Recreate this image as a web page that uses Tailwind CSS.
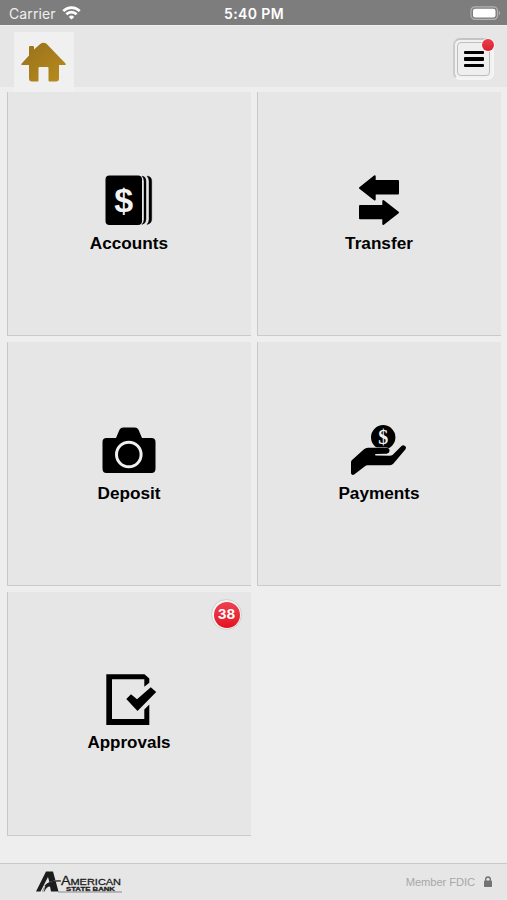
<!DOCTYPE html>
<html lang="en">
<head>
  <meta charset="UTF-8">
  <meta name="viewport" content="width=device-width, initial-scale=1.0">
  <title>American State Bank</title>
  <script src="https://cdn.jsdelivr.net/npm/@tailwindcss/browser@4"></script>
</head>
<body class="flex h-[900px] w-[507px] flex-col overflow-hidden bg-[#eeeeee] font-['Liberation_Sans',sans-serif] text-black">

  <!-- Status bar -->
  <div class="grid h-[25px] shrink-0 grid-cols-3 items-center bg-[#7d7d7d] pt-[3px] pr-[6px] pl-[9px] font-['Inter',sans-serif] text-white">
    <div class="flex items-center gap-[6px]">
      <span class="text-[14px] leading-5 text-[#efefef] tracking-[0.1px]">Carrier</span>
      <svg class="mb-[2px] h-[14px] w-[19px]" viewBox="0 0 19 14" fill="none" stroke="#fff" stroke-width="2.7">
        <path d="M1.3 5.1a11.6 11.6 0 0 1 16.4 0"/>
        <path d="M4.4 8.3a7.2 7.2 0 0 1 10.2 0"/>
        <path d="M9.5 13.6 6.8 10.9a3.8 3.8 0 0 1 5.4 0z" fill="#fff" stroke="none"/>
      </svg>
    </div>
    <span class="pr-[2px] text-center text-[14px] leading-5 font-semibold tracking-[0.4px]">5:40 PM</span>
    <svg class="mb-[3px] h-[14px] w-[31px] justify-self-end" viewBox="0 0 31 14">
      <rect x="1" y="0.8" width="26.5" height="12.6" rx="4" fill="none" stroke="#b3b3b3" stroke-width="1.2"/>
      <rect x="3" y="2.7" width="22.5" height="8.8" rx="2.2" fill="#fff"/>
      <path d="M28.8 4.8c1.5.5 1.5 4 0 4.5z" fill="#b3b3b3"/>
    </svg>
  </div>

  <!-- Header -->
  <header class="flex h-[62px] shrink-0 items-start justify-between border-t border-[#efefef] bg-[#e6e6e6] pr-[13px] pl-[14px]">
    <div class="mt-[6px] h-[60px] w-[60px] bg-[#f0f0f0]">
      <svg class="h-[60px] w-[60px]" viewBox="0 0 60 60">
        <defs>
          <linearGradient id="gold" x1="0" y1="0" x2="1" y2="1">
            <stop offset="0" stop-color="#97701a"/>
            <stop offset="1" stop-color="#b98c1e"/>
          </linearGradient>
        </defs>
        <path fill="url(#gold)" d="M15 15q0-1 1-1h3q1 0 1 1v2.5l6.5-5.7q3-2 6 0L51.500 31.500q1 1.500-.5 1.500h-6v13.500q0 3-3 3h-6.500q-1 0-1-1V36q0-1-1-1h-8q-1 0-1 1v12.500q0 1-1 1H18q-3 0-3-3V33H8.500q-2 0-.8-1.500L15 23.500z"/>
      </svg>
    </div>
    <button class="relative mt-[12px] flex h-[42px] w-[41px] items-center justify-center rounded-[7px] border-2 border-t-[#c4c4c4] border-r-[#f5f5f5] border-b-[#f5f5f5] border-l-[#cccccc] bg-[#f1f1f1]">
      <span class="flex h-[34px] w-[33px] flex-col items-center justify-center gap-[3px] rounded-[4px] border border-[#bebebe] bg-[#efefef]">
        <span class="h-[3.500px] w-[20px] rounded-[1px] bg-black"></span>
        <span class="h-[3.500px] w-[20px] rounded-[1px] bg-black"></span>
        <span class="h-[3.500px] w-[20px] rounded-[1px] bg-black"></span>
      </span>
      <span class="absolute -top-[1px] -right-[2px] h-[12px] w-[12px] rounded-full bg-linear-to-b from-[#ef3b48] to-[#d81f31] ring-1 ring-[#f3f3f3]"></span>
    </button>
  </header>

  <!-- Tiles -->
  <main class="grid grow auto-rows-[244px] grid-cols-[244px_244px] content-start gap-x-[6px] gap-y-[6px] pt-[5px] pl-[7px]">
    <div class="flex flex-col items-center border-b border-l border-b-[#cacaca] border-l-[#c8c8c8] bg-[#e6e6e6] pt-[83px] pr-[1px]">
      <svg class="h-[50px] w-[60px]" viewBox="0 0 60 50">
        <rect x="6.500" y="0.500" width="36.500" height="49.500" rx="4"/>
        <path d="M43 1q4 .5 4 5v38q0 4.500-4 5.500 2-2 2-5V6q0-3-2-5zM48 1q4.700.500 4.700 5v38q0 4.500-4.700 5.500 2-2 2-5V6q0-3-2-5z" stroke="#000" stroke-width=".4"/>
        <text x="24.800" y="36.500" text-anchor="middle" fill="#f2f2f2" font-family="Liberation Sans" font-weight="bold" font-size="34">$</text>
      </svg>
      <span class="mt-1.5 text-[17.200px] leading-6 font-bold">Accounts</span>
    </div>

    <div class="flex flex-col items-center border-b border-l border-b-[#cacaca] border-l-[#c8c8c8] bg-[#e6e6e6] pt-[83px] pr-[1px]">
      <svg class="h-[50px] w-[60px]" viewBox="0 0 60 50" stroke="#000" stroke-width="2" stroke-linejoin="round">
        <path d="M11 13 25.700 1.200V6H49v12.500H25.700v6z"/>
        <path d="M49 37.500 34.300 26v5H11v12.300h23.300V49z"/>
      </svg>
      <span class="mt-1.5 text-[17.200px] leading-6 font-bold">Transfer</span>
    </div>

    <div class="flex flex-col items-center border-b border-l border-b-[#cacaca] border-l-[#c8c8c8] bg-[#e6e6e6] pt-[83px] pr-[1px]">
      <svg class="h-[50px] w-[60px]" viewBox="0 0 60 50">
        <path d="M7.500 13H17l3.500-8.300q1.200-2.300 3.700-2.300h11.600q2.500 0 3.700 2.300l3.500 8.300h9.500q4 0 4 4v26.500q0 4.500-4 4.500h-45q-4 0-4-4.500V17q0-4 4-4z"/>
        <circle cx="29.800" cy="29.500" r="12.300" fill="none" stroke="#f0f0f0" stroke-width="3"/>
      </svg>
      <span class="mt-1.5 text-[17.200px] leading-6 font-bold">Deposit</span>
    </div>

    <div class="flex flex-col items-center border-b border-l border-b-[#cacaca] border-l-[#c8c8c8] bg-[#e6e6e6] pt-[83px] pr-[1px]">
      <svg class="h-[50px] w-[60px]" viewBox="0 0 60 50">
        <circle cx="34.200" cy="12.300" r="12.200"/>
        <text x="34.200" y="19" text-anchor="middle" fill="#f0f0f0" font-family="Liberation Serif" font-weight="bold" font-size="20">$</text>
        <path stroke="#e6e6e6" stroke-width="1" paint-order="stroke" d="M2 48.500V37q0-1 1-2l12-10.700q1.500-1.500 4-1.500h18q3.500 0 3.500 2.700t-3 3.200l-11 .3q-.8.900 0 1.500l14 .2q2 0 3-.8l9-9q1.500-1.500 3.500 0 1.800 1.500.3 3.500L44.500 38.500q-1.500 1.700-3.500 1.700H18.500q-1.500 0-2.500 1L5.500 49.300q-2.500 1.500-3.500-.8z"/>
      </svg>
      <span class="mt-1.5 text-[17.200px] leading-6 font-bold">Payments</span>
    </div>

    <div class="relative flex flex-col items-center border-b border-l border-b-[#cacaca] border-l-[#c8c8c8] bg-[#e6e6e6] pt-[82px] pr-[1px]">
      <svg class="h-[51px] w-[60px]" viewBox="0 0 60 51">
        <path d="M7.300.3H45.500l4.800 4.300v4.200l-5 4V5.300H13v39.800h32.300V35.500l5-5V51h-43z"/>
        <path d="M27.300 25.100 32 20.300l6 5L51.800 13.300l5.400 4.800L38.500 37z"/>
      </svg>
      <span class="mt-1.5 text-[17px] leading-6 font-bold">Approvals</span>
      <span class="absolute top-[7px] right-[9px] flex h-[31px] w-[31px] items-center justify-center rounded-full border border-[#cfcfcf] bg-[#f5f5f5]">
        <span class="flex h-[26px] w-[26px] items-center justify-center rounded-full bg-linear-to-b from-[#ee3f50] to-[#e30b20] font-['Inter',sans-serif] text-[13.500px] font-bold text-white">38</span>
      </span>
    </div>
  </main>

  <!-- Footer -->
  <footer class="flex h-[37px] shrink-0 items-center justify-between border-t border-[#c9c9c9] bg-[#e6e6e6] pr-[15px] pl-[36px]">
    <svg class="h-[24px] w-[88px]" viewBox="0 0 88 24" fill="#1c1c1c">
      <path d="M0 21.500 10 1.500h7l5.500 20h-7.500l-1-5q-3.500 0-5.500 5H6.500q1-6.500 7-9l-1.500-5.500-7.500 14.500z"/>
      <path d="M7.500 21.500q-.5-5 4-8 5-3 14.500-3" fill="none" stroke="#e6e6e6" stroke-width="1"/>
      <path d="M9 16q5-5.500 16-5" fill="none" stroke="#1c1c1c" stroke-width="1.200"/>
      <g font-family="Liberation Sans" stroke="#1c1c1c" stroke-width=".3">
        <text x="25" y="14.500" font-size="12" textLength="9.500" lengthAdjust="spacingAndGlyphs">A</text>
        <text x="34.500" y="14.500" font-size="9.500" textLength="50.500" lengthAdjust="spacingAndGlyphs">MERICAN</text>
        <text x="30" y="20.500" font-size="6" font-weight="bold" textLength="49" lengthAdjust="spacingAndGlyphs">STATE BANK</text>
      </g>
      <path d="M22 22H86" stroke="#8a8a8a" stroke-width="1"/>
    </svg>
    <div class="flex items-center gap-[9px]">
      <span class="pt-[1px] text-[11.200px] tracking-[-0.080px] text-[#a8a8a8]">Member FDIC</span>
      <svg class="mb-[1px] h-[11px] w-[8px]" viewBox="0 0 8 11">
        <rect y="4.500" width="8" height="6.500" rx=".8" fill="#737373"/>
        <path d="M1.700 5V3.300a2.300 2.300 0 0 1 4.600 0V5" fill="none" stroke="#737373" stroke-width="1.400"/>
      </svg>
    </div>
  </footer>
</body>
</html>
